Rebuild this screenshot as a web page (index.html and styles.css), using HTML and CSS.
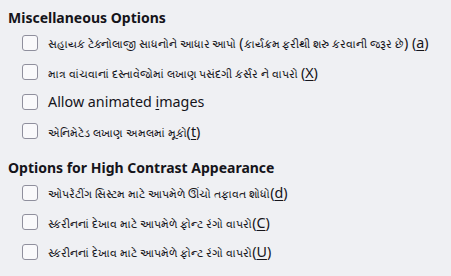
FILE: index.html
```html
<!DOCTYPE html>
<html>
<head>
<meta charset="utf-8">
<link rel="stylesheet" href="styles.css">
</head>
<body>
<section class="group">
  <h2 class="group-title">Miscellaneous Options</h2>
  <label class="opt"><span class="box"></span><span class="lbl"><span class="gu">સહાયક ટેક્નોલાજી સાધનોને આધાર આપો </span>(<span class="gu">કાર્યક્રમ ફરીથી શરુ કરવાની જરૂર છે</span>) (<u>a</u>)</span></label>
  <label class="opt"><span class="box"></span><span class="lbl"><span class="gu">માત્ર વાંચવાનાં દસ્તાવેજોમાં લખાણ પસંદગી કર્સર ને વાપરો </span>(<u>X</u>)</span></label>
  <label class="opt"><span class="box"></span><span class="lbl">Allow animated <u>i</u>mages</span></label>
  <label class="opt"><span class="box"></span><span class="lbl"><span class="gu">એનિમેટેડ લખાણ અમલમાં મૂકો</span>(<u>t</u>)</span></label>
</section>
<section class="group">
  <h2 class="group-title">Options for High Contrast Appearance</h2>
  <label class="opt"><span class="box"></span><span class="lbl"><span class="gu">ઓપરેટીંગ સિસ્ટમ માટે આપમેળે ઊંચો તફાવત શોધો</span>(<u>d</u>)</span></label>
  <label class="opt"><span class="box"></span><span class="lbl"><span class="gu">સ્કરીનનાં દેખાવ માટે આપમેળે ફોન્ટ રંગો વાપરો</span>(<u>C</u>)</span></label>
  <label class="opt"><span class="box"></span><span class="lbl"><span class="gu">સ્કરીનનાં દેખાવ માટે આપમેળે ફોન્ટ રંગો વાપરો</span>(<u>U</u>)</span></label>
</section>
</body>
</html>
```
FILE: styles.css
```css
html, body {
  margin: 0;
  background: #eff0f3;
}
body {
  padding: 8px 8px 0 8px;
  font-family: "Noto Sans", "Open Sans", sans-serif;
  color: #15141a;
  font-size: 14.3px;
}
.group {
  margin: 0 0 12px 0;
}
.group-title {
  margin: 0;
  font-size: 14px;
  font-weight: 700;
  line-height: 20px;
  height: 20px;
}
.opt {
  display: flex;
  align-items: center;
  gap: 10px;
  height: 29.5px;
  padding-left: 14px;
  white-space: nowrap;
}
.box {
  width: 14px;
  height: 14px;
  border: 1px solid #8f8f9d;
  border-radius: 3px;
  background: #f9f9fb;
  flex: none;
}
.gu {
  font-size: 11px;
}
.lbl u {
  text-underline-offset: 2px;
}
```
